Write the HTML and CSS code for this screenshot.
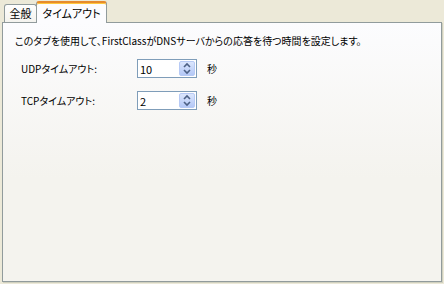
FILE: index.html
```html
<!DOCTYPE html>
<html lang="ja">
<head>
	<meta charset="UTF-8">
	<title>タイムアウト</title>
	<link rel="stylesheet" href="styles.css">
</head>
<body>
	<div class="tabs">
		<div class="tabBar">
			<a href="javascript:;" class="tab">全般</a>
			<a href="javascript:;" class="tab cur">タイムアウト</a>
		</div>
		<div class="panel">
			<p class="desc">このタブを使用して、FirstClassがDNSサーバからの応答を待つ時間を設定します。</p>
			<div class="row">
				<span class="label">UDPタイムアウト:</span>
				<div class="spin">
					<input type="text" value="10">
					<span class="spinBtn">
						<svg width="14" height="15" viewBox="0 0 14 15"><path d="M4 6 L7 3 L10 6" fill="none" stroke="#4d6185" stroke-width="1.6"/><path d="M4 9 L7 12 L10 9" fill="none" stroke="#4d6185" stroke-width="1.6"/></svg>
					</span>
				</div>
				<span class="unit">秒</span>
			</div>
			<div class="row">
				<span class="label">TCPタイムアウト:</span>
				<div class="spin">
					<input type="text" value="2">
					<span class="spinBtn">
						<svg width="14" height="15" viewBox="0 0 14 15"><path d="M4 6 L7 3 L10 6" fill="none" stroke="#4d6185" stroke-width="1.6"/><path d="M4 9 L7 12 L10 9" fill="none" stroke="#4d6185" stroke-width="1.6"/></svg>
					</span>
				</div>
				<span class="unit">秒</span>
			</div>
		</div>
	</div>
</body>
</html>
```

FILE: styles.css
```css
*{
	margin: 0;
	padding: 0;
	box-sizing: border-box;
}
html,body{
	width: 444px;
	height: 284px;
	background-color: #ece9d8;
	font-family: "Noto Sans CJK JP", "DejaVu Sans", sans-serif;
	font-size: 10px;
	font-feature-settings: "palt";
	color: #000;
	overflow: hidden;
}
.tabs{
	padding: 1px 2px 0 2px;
}
.tabBar{
	display: flex;
	align-items: flex-end;
	height: 21px;
	padding-left: 2px;
	position: relative;
	z-index: 2;
}
.tab{
	display: block;
	height: 18px;
	width: 33px;
	line-height: 16px;
	font-size: 11px;
	text-align: center;
	color: #000;
	text-decoration: none;
	border: 1px solid #919b9c;
	border-bottom: none;
	border-radius: 3px 3px 0 0;
	background: linear-gradient(#fefefe, #f4f3ee);
}
.tab.cur{
	height: 22px;
	width: 71px;
	line-height: 20px;
	margin-left: -1px;
	margin-bottom: -1px;
	background: #fcfcfe;
	border-top: 2px solid #e68b2c;
	box-shadow: inset 0 1px 0 #ffc73c;
}
.panel{
	height: 260px;
	width: 440px;
	border: 1px solid #919b9c;
	box-shadow: 1px 1px 0 #d0d0bf;
	background: linear-gradient(#fcfcfe, #f4f3ee 60%, #f4f3ee);
	padding: 10px 0 0 12px;
}
.desc{
	line-height: 16px;
}
.row{
	display: flex;
	align-items: center;
	height: 19px;
	margin-top: 10px;
	padding-left: 6px;
}
.row + .row{
	margin-top: 13px;
}
.label{
	width: 116px;
}
.spin{
	display: flex;
	align-items: center;
	width: 60px;
	height: 19px;
	border: 1px solid #7f9db9;
	background: #fff;
	padding: 1px;
}
.spin input{
	width: 40px;
	border: none;
	outline: none;
	font-family: inherit;
	font-size: 11px;
	padding-left: 1px;
	background: transparent;
}
.spinBtn{
	display: flex;
	width: 16px;
	height: 15px;
	margin-left: auto;
	background: linear-gradient(#dbe6fd, #b4c8f6);
	border: 1px solid #b7caf5;
	border-radius: 2px;
	justify-content: center;
	align-items: center;
}
.unit{
	margin-left: 10px;
}
```
